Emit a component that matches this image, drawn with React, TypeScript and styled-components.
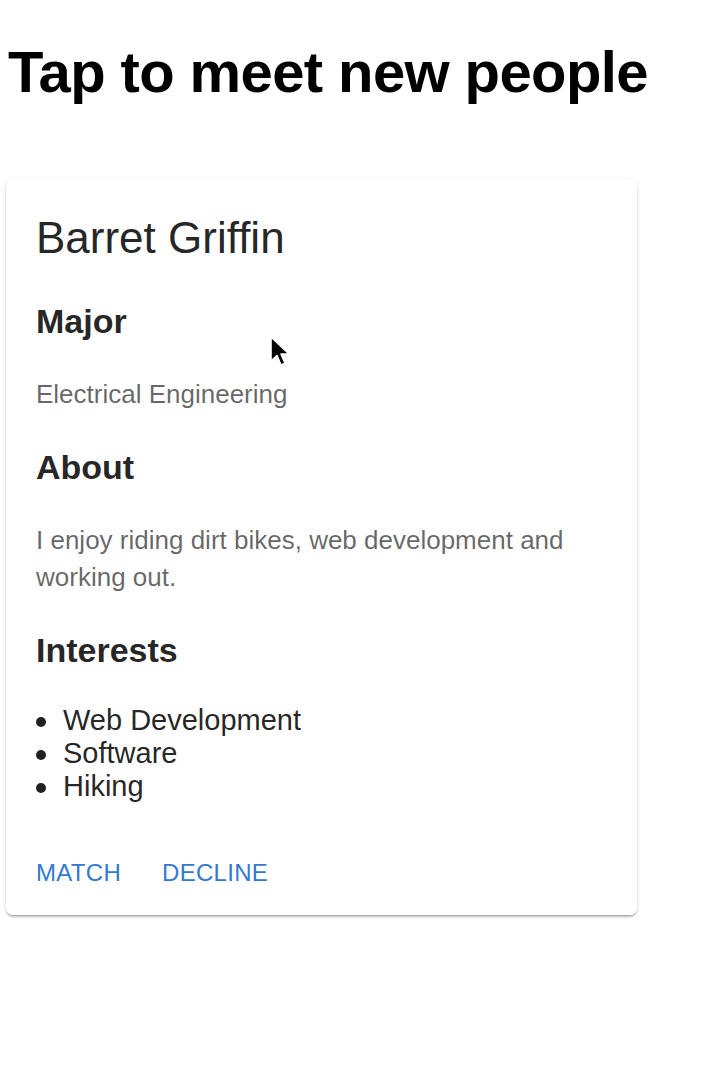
import React from "react";
import styled, { createGlobalStyle } from "styled-components";

const GlobalStyle = createGlobalStyle`
  html, body { margin: 0; padding: 0; background: #ffffff; }
  body { font-family: "Liberation Sans", Arial, sans-serif; }
`;

const Page = styled.div`
  position: relative;
  width: 728px;
  min-height: 1090px;
  padding: 43px 0 0 6px;
  box-sizing: border-box;
`;

const Title = styled.h1`
  margin: 0 0 78px 2px;
  font-family: "Liberation Sans", Arial, sans-serif;
  font-weight: 700;
  font-size: 58px;
  line-height: 58px;
  letter-spacing: -0.6px;
  color: #000;
`;

const Card = styled.div`
  width: 631px;
  box-sizing: border-box;
  padding: 33px 30px 27px 30px;
  background: #fff;
  border-radius: 7px;
  box-shadow: 0px 3px 2px -2px rgba(0, 0, 0, 0.22),
    0px 2px 2px 0px rgba(0, 0, 0, 0.14), 0px 1px 5px 0px rgba(0, 0, 0, 0.1);
`;

const Name = styled.h2`
  margin: 0;
  font-weight: 400;
  font-size: 44px;
  line-height: 52px;
  color: rgba(0, 0, 0, 0.87);
`;

const SectionTitle = styled.h3<{ $gap: number }>`
  margin: ${(p) => p.$gap}px 0 0 0;
  font-weight: 700;
  font-size: 34px;
  line-height: 40px;
  color: rgba(0, 0, 0, 0.87);
`;

const Body = styled.p`
  margin: 35px 0 0 0;
  font-size: 26px;
  line-height: 37px;
  color: rgba(0, 0, 0, 0.6);
`;

const List = styled.ul`
  list-style: none;
  margin: 34px 0 0 0;
  padding: 0;
`;

const Item = styled.li`
  display: flex;
  align-items: flex-start;
  font-size: 29px;
  line-height: 33px;
  color: rgba(0, 0, 0, 0.87);
  &::before {
    content: "";
    flex: none;
    width: 10px;
    height: 10px;
    margin: 13px 17px 0 0;
    border-radius: 50%;
    background: rgba(0, 0, 0, 0.87);
  }
`;

const Actions = styled.div`
  display: flex;
  gap: 41px;
  margin-top: 55px;
`;

const ActionButton = styled.button`
  border: none;
  background: none;
  padding: 0;
  font-family: "Liberation Sans", Arial, sans-serif;
  font-size: 24px;
  line-height: 30px;
  letter-spacing: 0.3px;
  text-transform: uppercase;
  color: #3479d1;
  cursor: pointer;
`;

const Cursor = styled.svg`
  position: absolute;
  left: 268px;
  top: 335px;
  width: 26px;
  height: 36px;
`;

export default function App() {
  return (
    <Page>
      <GlobalStyle />
      <Title>Tap to meet new people</Title>
      <Card>
        <Name>Barret Griffin</Name>
        <SectionTitle $gap={37}>Major</SectionTitle>
        <Body>Electrical Engineering</Body>
        <SectionTitle $gap={34}>About</SectionTitle>
        <Body>I enjoy riding dirt bikes, web development and working out.</Body>
        <SectionTitle $gap={34}>Interests</SectionTitle>
        <List>
          <Item>Web Development</Item>
          <Item>Software</Item>
          <Item>Hiking</Item>
        </List>
        <Actions>
          <ActionButton>Match</ActionButton>
          <ActionButton>Decline</ActionButton>
        </Actions>
      </Card>
      <Cursor viewBox="0 0 26 36">
        <path
          d="M3 2 L3 26 L9 20.5 L13 30 L17 28.3 L13 19 L21 19 Z"
          fill="#000"
          stroke="#fff"
          strokeWidth="1.6"
          strokeLinejoin="round"
        />
      </Cursor>
    </Page>
  );
}
